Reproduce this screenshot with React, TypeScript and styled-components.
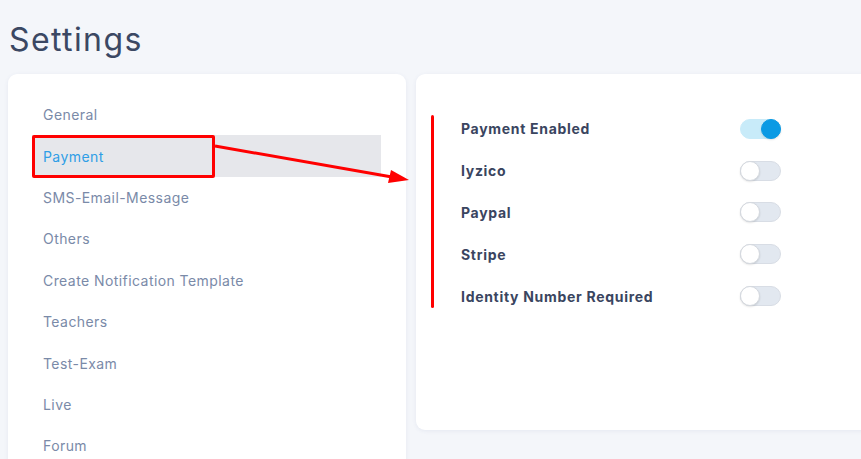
import React from "react";
import styled, { createGlobalStyle } from "styled-components";

const Global = createGlobalStyle`
  html, body { margin: 0; padding: 0; background: #f4f6fa; }
  body { font-family: "Inter", "Noto Sans", sans-serif; overflow: hidden; }
  * { box-sizing: border-box; }
`;

const Page = styled.div`
  position: relative;
  width: 861px;
  height: 459px;
  overflow: hidden;
  padding: 0 0 0 8px;
`;

const Title = styled.h1`
  margin: 0;
  padding: 20px 0 0 1px;
  height: 74px;
  font-size: 32px;
  font-weight: 400;
  color: #3b4863;
  letter-spacing: 1.4px;
`;

const Columns = styled.div`
  display: flex;
  gap: 10px;
  align-items: flex-start;
`;

const Card = styled.div<{ $w?: string; $h?: string }>`
  background: #ffffff;
  border-radius: 9px;
  box-shadow: 0 1px 4px rgba(60, 80, 140, 0.08);
  width: ${(p) => p.$w ?? "auto"};
  height: ${(p) => p.$h ?? "auto"};
  flex: ${(p) => (p.$w ? "none" : "1")};
`;

const Menu = styled.ul`
  list-style: none;
  margin: 0;
  padding: 20px 25px 0 24px;
`;

const MenuItem = styled.li<{ $active?: boolean }>`
  height: 41.4px;
  display: flex;
  align-items: center;
  padding-left: 11px;
  font-size: 14px;
  letter-spacing: 0.43px;
  color: ${(p) => (p.$active ? "#2f9ee6" : "#7a8aa8")};
  background: ${(p) => (p.$active ? "#e6e7eb" : "transparent")};
`;

const Options = styled.div`
  padding: 34px 0 0 45px;
  display: flex;
  flex-direction: column;
`;

const Row = styled.div`
  height: 41.8px;
  display: flex;
  align-items: center;
  width: 320px;
  justify-content: space-between;
`;

const Label = styled.span`
  font-size: 14px;
  font-weight: 700;
  letter-spacing: 0.7px;
  color: #3a4560;
`;

const Track = styled.span<{ $on?: boolean }>`
  position: relative;
  width: 41px;
  height: 20px;
  border-radius: 10px;
  background: ${(p) => (p.$on ? "#c8ebf9" : "#e2e8f0")};
  border: 1px solid ${(p) => (p.$on ? "#c8ebf9" : "#d8dde5")};
  display: flex;
  align-items: center;
  justify-content: ${(p) => (p.$on ? "flex-end" : "flex-start")};
`;

const Knob = styled.span<{ $on?: boolean }>`
  width: 20px;
  height: 20px;
  margin: -1px;
  border-radius: 50%;
  background: ${(p) => (p.$on ? "#0a9ae4" : "#ffffff")};
  border: 1px solid ${(p) => (p.$on ? "#0a9ae4" : "#d5d9df")};
  box-shadow: 0 1px 2px rgba(0, 0, 0, 0.12);
`;

const Highlight = styled.div`
  position: absolute;
  left: 32px;
  top: 135px;
  width: 183px;
  height: 43px;
  border: 3px solid #ff0000;
  border-radius: 2px;
`;

const VLine = styled.div`
  position: absolute;
  left: 431px;
  top: 115px;
  width: 3px;
  height: 193px;
  background: #ff0000;
  border-radius: 2px;
`;

const ArrowSvg = styled.svg`
  position: absolute;
  left: 0;
  top: 0;
  pointer-events: none;
`;

const menu = [
  "General",
  "Payment",
  "SMS-Email-Message",
  "Others",
  "Create Notification Template",
  "Teachers",
  "Test-Exam",
  "Live",
  "Forum",
];

const options: [string, boolean][] = [
  ["Payment Enabled", true],
  ["Iyzico", false],
  ["Paypal", false],
  ["Stripe", false],
  ["Identity Number Required", false],
];

export default function App() {
  return (
    <Page>
      <Global />
      <Title>Settings</Title>
      <Columns>
        <Card $w="398px" $h="420px">
          <Menu>
            {menu.map((m) => (
              <MenuItem key={m} $active={m === "Payment"}>
                {m}
              </MenuItem>
            ))}
          </Menu>
        </Card>
        <Card $h="356px" style={{ marginRight: -20 }}>
          <Options>
            {options.map(([l, on]) => (
              <Row key={l}>
                <Label>{l}</Label>
                <Track $on={on}>
                  <Knob $on={on} />
                </Track>
              </Row>
            ))}
          </Options>
        </Card>
      </Columns>
      <Highlight />
      <VLine />
      <ArrowSvg width="861" height="459" viewBox="0 0 861 459">
        <line x1="215" y1="146" x2="392" y2="177" stroke="#ff0000" strokeWidth="3" />
        <polygon points="409,180 388,183 391,170" fill="#ff0000" />
      </ArrowSvg>
    </Page>
  );
}
